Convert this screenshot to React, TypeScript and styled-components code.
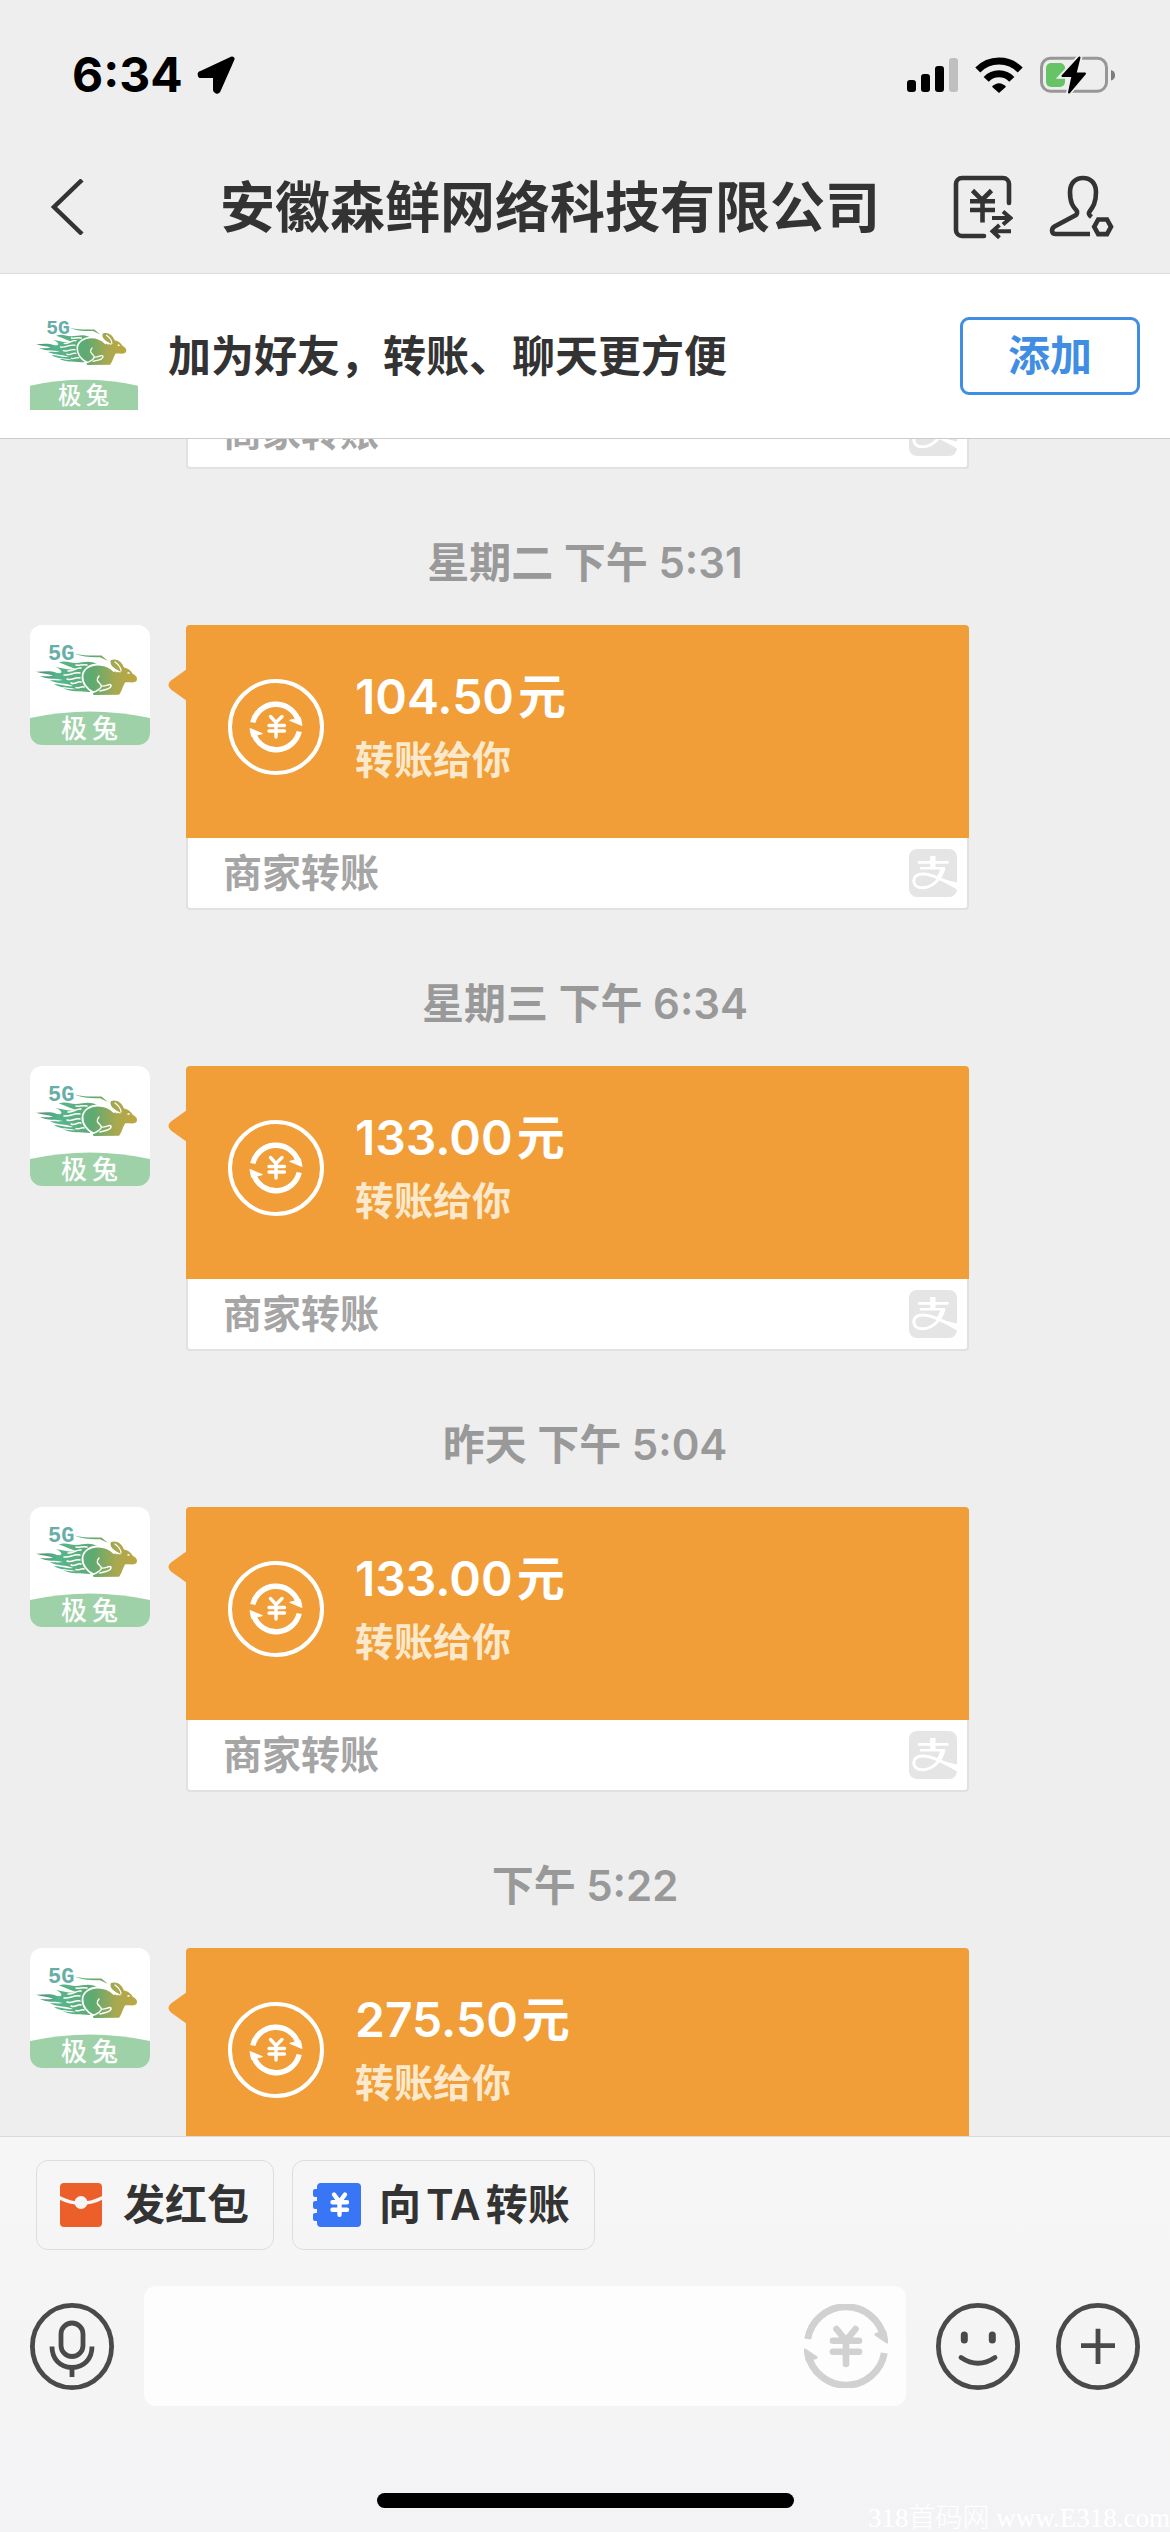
import React, { useLayoutEffect, useRef } from 'react'
import styled, { createGlobalStyle } from 'styled-components';

const GlobalStyle = createGlobalStyle`
    * {
        box-sizing: border-box;
    }
    body {
        margin: 0;
        background: #eeeeee;
        color: #333333;
        font-family: Inter, 'Noto Sans CJK SC', sans-serif;
        font-weight: 600;
    }
    button, input {
        font: inherit;
        color: inherit;
        border: none;
        background: none;
        padding: 0;
        cursor: pointer;
    }
    svg {
        display: block;
        flex-shrink: 0;
    }
`

const Page = styled.div`
    display: flex;
    flex-direction: column;
    height: 100vh;
`

const StatusBar = styled.div`
    display: flex;
    align-items: center;
    height: 141px;
    padding: 8px 55px 0 72px;
    flex-shrink: 0;
    color: #000000;
`

const Clock = styled.span`
    font-size: 48px;
    font-weight: 700;
    margin-right: 14px;
`

const StatusIcons = styled.div`
    display: flex;
    align-items: center;
    gap: 17px;
    margin-left: auto;
`

const NavBar = styled.header`
    display: flex;
    align-items: center;
    height: 133px;
    padding: 0 56px 0 30px;
    border-bottom: 1px solid #dddddd;
    flex-shrink: 0;
`

const BackButton = styled.button`
    width: 117px;
    padding-left: 20px;
`

const Title = styled.h1`
    flex: 1;
    margin: 0;
    font-size: 55px;
    line-height: 80px;
    font-weight: 600;
    text-align: center;
    white-space: nowrap;
`

const NavActions = styled.div`
    display: flex;
    gap: 35px;
`

const FriendBanner = styled.section`
    display: flex;
    align-items: center;
    gap: 30px;
    height: 165px;
    padding: 0 30px;
    background: #ffffff;
    border-bottom: 1px solid #cccccc;
    flex-shrink: 0;
`

const BannerText = styled.p`
    flex: 1;
    margin: 0;
    font-size: 43px;
    line-height: 60px;
`

const AddButton = styled.button`
    width: 180px;
    height: 78px;
    border: 3px solid #3f8ee4;
    border-radius: 9px;
    color: #3f8ee4;
    font-size: 42px;
    line-height: 60px;
`

const Feed = styled.main`
    flex: 1;
    min-height: 0;
    padding: 0 30px;
    overflow-y: auto;
    scrollbar-width: none;
`

const TimeLabel = styled.div`
    margin: 64px 0 32px;
    font-size: 42px;
    line-height: 60px;
    text-align: center;
    color: #999999;
`

const MessageRow = styled.div`
    display: flex;
    align-items: flex-start;
    gap: 36px;
    margin-right: 171px;
`

const AvatarGap = styled.div`
    width: 120px;
    flex-shrink: 0;
`

const Avatar = styled.div<{ $size: number; $radius: number }>`
    width: ${({ $size }) => $size}px;
    height: ${({ $size }) => $size}px;
    border-radius: ${({ $radius }) => $radius}px;
    background: #ffffff;
    overflow: hidden;
    flex-shrink: 0;
`

const Card = styled.a`
    position: relative;
    flex: 1;
    color: inherit;
    text-decoration: none;
`

const CardArrow = styled.svg`
    position: absolute;
    top: 44px;
    left: -18px;
`

const CardBody = styled.div`
    display: flex;
    align-items: center;
    gap: 31px;
    padding: 42px 42px 51px;
    border-radius: 4px 4px 0 0;
    background: #f19d38;
`

const CardLines = styled.div`
    display: flex;
    flex-direction: column;
    gap: 6px;
`

const Amount = styled.div`
    display: flex;
    gap: 4px;
    font-size: 48px;
    line-height: 60px;
    color: #ffffff;
`

const CardNote = styled.div`
    font-size: 39px;
    line-height: 54px;
    color: #fce9cc;
`

const CardFooter = styled.div`
    display: flex;
    align-items: center;
    justify-content: space-between;
    height: 72px;
    padding: 0 10px 0 35px;
    border: 2px solid #e1e1e1;
    border-top: none;
    border-radius: 0 0 4px 4px;
    background: #ffffff;
    font-size: 39px;
    line-height: 54px;
    color: #a5a5a5;
`

const Composer = styled.footer`
    position: relative;
    border-top: 1px solid #d9d9d9;
    background: linear-gradient(#f6f6f6, #f3f3f5);
    padding: 23px 30px 24px;
    flex-shrink: 0;
`

const Chips = styled.div`
    display: flex;
    gap: 18px;
    padding: 0 6px;
`

const Chip = styled.button`
    display: flex;
    align-items: center;
    gap: 18px;
    height: 90px;
    padding: 0 24px 0 20px;
    border: 1px solid #dddddd;
    border-radius: 12px;
    font-size: 42px;
    line-height: 60px;
`

const ChipLabel = styled.span`
    display: flex;
    gap: 5px;
`

const InputRow = styled.div`
    display: flex;
    align-items: center;
    gap: 30px;
    margin-top: 36px;
`

const RoundButtons = styled.div`
    display: flex;
    gap: 36px;
`

const InputBox = styled.div`
    display: flex;
    align-items: center;
    flex: 1;
    min-width: 0;
    height: 120px;
    padding: 0 18px;
    border-radius: 12px;
    background: #fdfdfd;
`

const TextInput = styled.input`
    flex: 1;
    min-width: 0;
    height: 100%;
    outline: none;
    font-size: 42px;
`

const HomeIndicator = styled.div`
    width: 417px;
    height: 15px;
    margin: 87px auto 0;
    border-radius: 8px;
    background: #000000;
`

const Watermark = styled.span`
    position: absolute;
    right: 0;
    bottom: 0;
    font-family: 'Liberation Serif', 'Noto Sans CJK SC', serif;
    font-size: 27px;
    font-weight: 300;
    line-height: 28px;
    color: #ffffff;
    white-space: nowrap;
`

const LocationIcon = () => (
    <svg width="40" height="40" viewBox="0 0 40 40">
        <path d="M35 4L4 18.5a1 1 0 0 0 .4 2H18.5V35a1.4 1.4 0 0 0 2.6.5z" stroke="#000" strokeWidth="5" strokeLinejoin="round" />
    </svg>
)

const SignalIcon = () => (
    <svg width="51" height="36" viewBox="0 0 51 36">
        <rect x="0" y="23" width="9" height="12" rx="3" />
        <rect x="14" y="17" width="9" height="18" rx="3" />
        <rect x="28" y="9" width="9" height="26" rx="3" />
        <rect x="42" y="1" width="9" height="34" rx="3" fill="#bfbfbf" />
    </svg>
)

const WifiIcon = () => (
    <svg width="48" height="36" viewBox="0 0 48 36" fill="none" stroke="#000" strokeWidth="7">
        <path d="M2.8 13A29.5 29.5 0 0 1 45.2 13" />
        <path d="M11.2 22.4A17.5 17.5 0 0 1 36.8 22.4" />
        <path d="M17 29.7C21 25 27 25 31 29.7L24 36z" fill="#000" stroke="none" />
    </svg>
)

const BatteryIcon = () => (
    <svg width="75" height="38" viewBox="0 0 75 38">
        <rect x="1.5" y="2.2" width="65" height="33" rx="9" fill="none" stroke="#979797" strokeWidth="3" />
        <rect x="6" y="7" width="19" height="24" rx="5" fill="#66c466" />
        <path d="M71 14C76.5 15.5 76.5 23 71 24.5z" fill="#7d7d7d" />
        <path d="M40 .5L21.5 20.3H32L28.5 37.3 46 17H36.5z" stroke="#eee" strokeWidth="5" />
        <path d="M39.5 1.5L22.500 20H32.5L29 36.500 45 17.5H35.5z" stroke="#000" strokeWidth="2" strokeLinejoin="round" />
    </svg>
)

const TransferRecordIcon = () => (
    <svg width="60" height="64" viewBox="0 0 60 64" fill="none" stroke="#333" strokeWidth="4.6">
        <path d="M56 28V9a6 6 0 0 0-6-6H9a6 6 0 0 0-6 6v46a6 6 0 0 0 6 6h22" strokeLinecap="round" />
        <path d="M19.500 15.500L29 25l9.500-9.500M17 26.300h25M17 35h25M29.500 25v22.500" />
        <path d="M39 43h18M50 36.500l7.500 6.500-7.500 6.500M58 56.300H40M46.500 50l-7 6.300 7 6.500" strokeWidth="4" />
    </svg>
)

const ContactIcon = () => (
    <svg width="66" height="64" viewBox="0 0 66 64" fill="none" stroke="#333" strokeWidth="4.6">
        <path d="M43.5 42c-1-.8-3.500-3-2.200-5C45 32 48 28 48 17 48 8 42.500 3 35 3S22 8 22 17c0 11 3 14.500 6.500 18.500 1.200 1.500.8 3.500-1 4.800L6.500 51.500C3.500 53.500 2.500 59 8 59h34" />
        <path d="M50.2 44.5h8.800l4 7.300-4 7.300h-8.800l-4-7.300z" />
    </svg>
)

// running rabbit with a flame tail above the green name band
const RabbitLogo = ({ size }: { size: number }) => (
    <svg width={size} height={size} viewBox="0 0 120 120">
        <defs>
            <linearGradient id="rabbit" gradientUnits="userSpaceOnUse" x1="8" y1="0" x2="108" y2="0">
                <stop offset="0" stopColor="#4f8f70" />
                <stop offset=".2" stopColor="#55b58d" />
                <stop offset=".55" stopColor="#5faa70" />
                <stop offset=".78" stopColor="#a9a850" />
                <stop offset="1" stopColor="#bfa640" />
            </linearGradient>
        </defs>
        <text x="18" y="35" fontFamily="Liberation Mono" fontSize="22" fontWeight="700" fill="#68aea8">5G</text>
        <g fill="url(#rabbit)">
            <path d="M44 28.500C54 31 63 30.500 71.500 30.500L78 36 70 32.200C62 32.500 52 32 44 28.500z" />
            <path d="M52 52C51 44 60 39 69 39.500 77 40 83 45 87 47.500L89 46C83 43 79 39 81 35 87 33 92 37 94 42.500 99 43.500 101 46 103 49 107 51 108 54 106 56.500 102 58.500 98 56.500 95 57.500 92 63 92 66 89 69.800L64 70C62 69 63 67.500 65 67.500 56 65 53 59 52 52z" />
            <path d="M70 41C60 34 54 38 46 38 39 38 36 35 29 37.500 36 40 40 42 46 44 40 46 32 43 26 42 32 45 34 49 27 48 19 45 13 47 6 46.800 13 49 18 49 23 50.500 18 52 14 51 10 51 18 55 25 53 33 55 29 56 24 55 20 55.500 28 59 36 58 43 61 36 62 30 59 24 59 31 64 39 62 46 64 42 65 37 63 33 63.500 42 67 50 66 60 67z" />
        </g>
        <g fill="none" stroke="#fff" strokeLinecap="round">
            <path d="M63 67C57 64 52 58 52.500 51 53 44 60 39.500 68 39.500 75 39.500 80 42 84 46" strokeWidth="1.800" />
            <path d="M69 51C65 56 69 57 71 60 73 63 65 67 63 67M71 61C76 62 79 58 81 60 82 64 74 65 70 66" strokeWidth="1.400" />
            <path d="M77 36C80 42 84 45 90 47M85 37C89 40 91 43 91 46" strokeWidth="1.200" />
            <path d="M98 48h1" strokeWidth="1.600" />
            <path d="M51 43C46 42 44 47 38 46M50 48C43 47 40 51 34 50M50 53C44 52 42 56 37 54M51 57C47 56 45 60 41 58M54 62C51 61 49 64 46 62.500M57 40C52 39 49 41 46 40" strokeWidth="1.500" />
        </g>
        <path d="M0 93Q60 80 120 93V120H0z" fill="#9fd1a9" />
        <text x="31 62" y="113" fontFamily="Noto Sans CJK SC" fontSize="26" fontWeight="500" fill="#fff">极兔</text>
    </svg>
)

const TransferIcon = () => (
    <svg width="96" height="96" viewBox="0 0 96 96" fill="none" stroke="#fff" strokeLinecap="round">
        <circle cx="48" cy="48" r="46" strokeWidth="4" />
        <path d="M24.800 43.500A23.700 23.700 0 0 1 70 40.500M71.200 52.500A23.700 23.700 0 0 1 26 55.500" strokeWidth="5.400" strokeLinecap="butt" />
        <path d="M62 41.500L74 46.500 72.500 39zM34 54.500L22 49.500 23.500 57z" fill="#fff" strokeWidth="1" />
        <path d="M42.500 37.500L48 43.500l6-6M41 46.500h15.500M41 52h15.500M48 44v14" strokeWidth="3.400" />
    </svg>
)

const AlipayIcon = () => (
    <svg width="48" height="48" viewBox="0 0 48 48" fill="none" stroke="#fff">
        <rect width="48" height="48" rx="8" fill="#e5e5e5" stroke="none" />
        <path d="M10 13.400h28.500M12 19.200h23" strokeWidth="2.600" strokeLinecap="round" />
        <path d="M23.800 7v12" strokeWidth="5.400" />
        <path d="M35 19C32.500 28 25 38.500 13.500 38.800 8 38.800 4.800 36 4.800 32 4.800 27 9 25 14 25 22 25 30 29.500 48 37.500" strokeWidth="3" />
        <path d="M34 19C33 23 31 27 29 30" strokeWidth="4.500" />
        <path d="M27 28.500L48 33.500V40.500z" fill="#fff" stroke="none" />
    </svg>
)

const RedPacketIcon = () => (
    <svg width="48" height="44" viewBox="0 0 48 44">
        <rect x="3" width="42" height="44" rx="4" fill="#ec5f2a" />
        <path d="M2 14.500Q24 26 46 14.500" fill="none" stroke="#f6f6f6" strokeWidth="3.600" />
        <circle cx="24" cy="19.500" r="6.500" fill="#f6f6f6" />
    </svg>
)

const TransferTicketIcon = () => (
    <svg width="48" height="44" viewBox="0 0 48 44">
        <rect x="4" width="44" height="44" rx="4" fill="#3876f6" />
        <path d="M5 6H2a2 2 0 0 0-2 2v4a2 2 0 0 0 2 2h3zM5 18H2a2 2 0 0 0-2 2v4a2 2 0 0 0 2 2h3zM5 30H2a2 2 0 0 0-2 2v4a2 2 0 0 0 2 2h3z" fill="#3876f6" />
        <path d="M21 11.500l5.500 7.500L32 11.500M19.500 19.300h14.500M19.500 26.700h14.500M26.500 19.300v12.500" fill="none" stroke="#fff" strokeWidth="4.400" strokeLinecap="round" />
    </svg>
)

const RoundIcon = ({ children }: { children: React.ReactNode }) => (
    <svg width="84" height="87" viewBox="0 0 84 87" fill="none" stroke="#4a4a4a" strokeWidth="4.8">
        <ellipse cx="42" cy="43.5" rx="39.6" ry="41.1" />
        {children}
    </svg>
)

const InputTransferIcon = () => (
    <svg width="84" height="84" viewBox="0 0 84 84" fill="none" stroke="#d1d1d1" strokeLinecap="round">
        <path d="M3.700 35A38.800 38.800 0 0 1 80 34M80.300 49A38.800 38.800 0 0 1 4 50" strokeWidth="7" strokeLinecap="butt" />
        <path d="M72 30.500L83 38 81 28zM12 53.500L1 46 3 56z" fill="#d1d1d1" strokeWidth="3" strokeLinejoin="round" />
        <path d="M32.500 25L42 36.500 51.500 25M29 36.700h26M29 47.700h26M42 37v23" strokeWidth="6.600" />
    </svg>
)

const messages = [
    { id: 2, time: '星期二 下午 5:31', amount: '104.50' },
    { id: 3, time: '星期三 下午 6:34', amount: '133.00' },
    { id: 4, time: '昨天 下午 5:04', amount: '133.00' },
    { id: 5, time: '下午 5:22', amount: '275.50' },
]

const MerchantFooter = () => (
    <CardFooter>
        <span>商家转账</span>
        <AlipayIcon />
    </CardFooter>
)

const TransferMessage = ({ amount }: { amount: string }) => (
    <MessageRow>
        <Avatar $size={120} $radius={12}>
            <RabbitLogo size={120} />
        </Avatar>
        <Card href="#transfer">
            <CardArrow width="19" height="32" viewBox="0 0 19 32">
                <path d="M19 0L3 11.500Q-2 16 3 20.500L19 32z" fill="#f19d38" />
            </CardArrow>
            <CardBody>
                <TransferIcon />
                <CardLines>
                    <Amount>
                        <span>{amount}</span>
                        <span>元</span>
                    </Amount>
                    <CardNote>转账给你</CardNote>
                </CardLines>
            </CardBody>
            <MerchantFooter />
        </Card>
    </MessageRow>
)

const App = () => {
    const feedRef = useRef<HTMLElement>(null)

    // the end of the earlier card stays in view under the banner
    useLayoutEffect(() => {
        if (feedRef.current) {
            feedRef.current.scrollTop = 42
        }
    }, [])

    return (
        <Page>
            <GlobalStyle />
            <StatusBar>
                <Clock>6:34</Clock>
                <LocationIcon />
                <StatusIcons>
                    <SignalIcon />
                    <WifiIcon />
                    <BatteryIcon />
                </StatusIcons>
            </StatusBar>
            <NavBar>
                <BackButton aria-label="返回">
                    <svg width="34" height="56" viewBox="0 0 34 56" fill="none" stroke="#333" strokeWidth="4.5">
                        <path d="M32 1L4 28l28 27" />
                    </svg>
                </BackButton>
                <Title>安徽森鲜网络科技有限公司</Title>
                <NavActions>
                    <button aria-label="转账记录"><TransferRecordIcon /></button>
                    <button aria-label="联系人设置"><ContactIcon /></button>
                </NavActions>
            </NavBar>
            <FriendBanner>
                <Avatar $size={108} $radius={0}>
                    <RabbitLogo size={108} />
                </Avatar>
                <BannerText>加为好友，转账、聊天更方便</BannerText>
                <AddButton>添加</AddButton>
            </FriendBanner>
            <Feed ref={feedRef}>
                <MessageRow>
                    <AvatarGap />
                    <Card href="#transfer">
                        <MerchantFooter />
                    </Card>
                </MessageRow>
                {messages.map(({ id, time, amount }) => (
                    <React.Fragment key={id}>
                        <TimeLabel>{time}</TimeLabel>
                        <TransferMessage amount={amount} />
                    </React.Fragment>
                ))}
            </Feed>
            <Composer>
                <Chips>
                    <Chip>
                        <RedPacketIcon />
                        <ChipLabel>发红包</ChipLabel>
                    </Chip>
                    <Chip>
                        <TransferTicketIcon />
                        <ChipLabel>
                            <span>向</span>
                            <span>TA</span>
                            <span>转账</span>
                        </ChipLabel>
                    </Chip>
                </Chips>
                <InputRow>
                    <button aria-label="语音">
                        <RoundIcon>
                            <rect x="31" y="20" width="22" height="33.500" rx="11" />
                            <path d="M22 43.500C22 56 30 64.500 42 64.500S62 56 62 43.500M42 64.500V74" />
                        </RoundIcon>
                    </button>
                    <InputBox>
                        <TextInput type="text" aria-label="消息" />
                        <button aria-label="转账"><InputTransferIcon /></button>
                    </InputBox>
                    <RoundButtons>
                        <button aria-label="表情">
                            <RoundIcon>
                                <path d="M28.300 32v5M56.300 32v5" strokeWidth="7" strokeLinecap="round" />
                                <path d="M25 54.500Q42 66 59 54.500" strokeLinecap="round" />
                            </RoundIcon>
                        </button>
                        <button aria-label="更多">
                            <RoundIcon>
                                <path d="M25 42.700h34M42 25.700V61" />
                            </RoundIcon>
                        </button>
                    </RoundButtons>
                </InputRow>
                <HomeIndicator />
                <Watermark>318首码网 www.E318.com</Watermark>
            </Composer>
        </Page>
    )
}

export default App;
